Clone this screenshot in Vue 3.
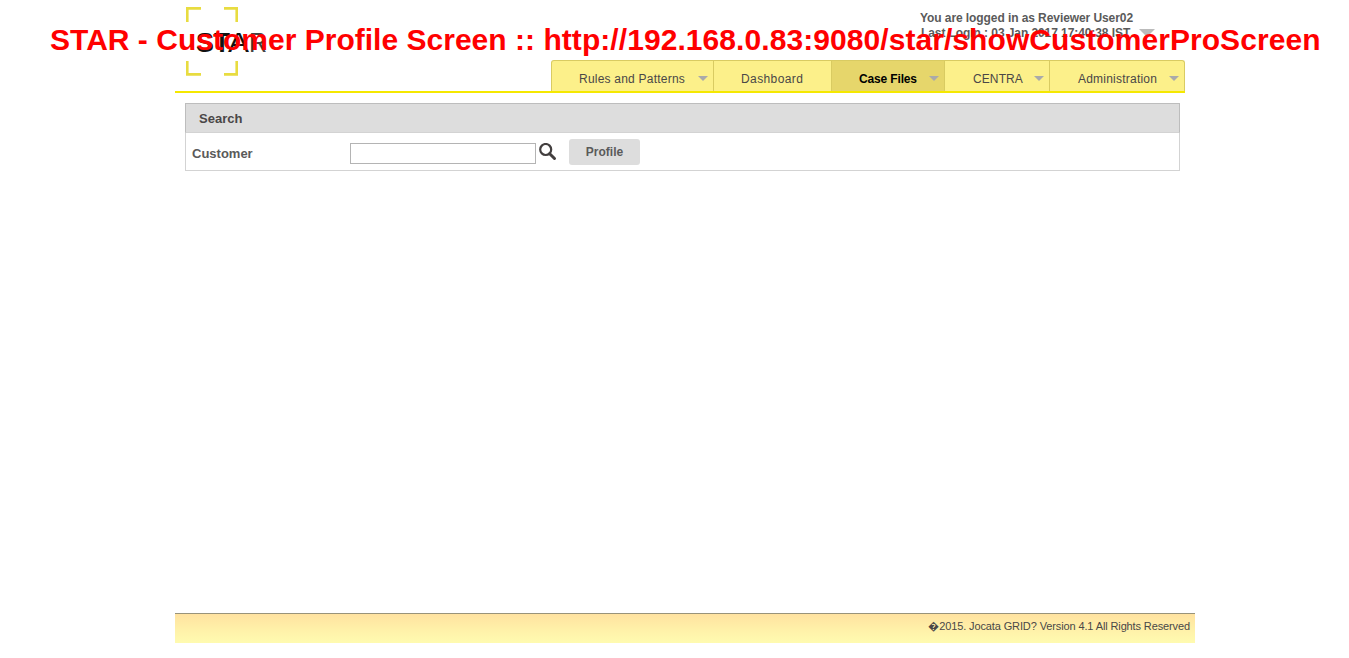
<script setup>
const tabs = [
  { label: 'Rules and Patterns', id: 'rules', menu: true },
  { label: 'Dashboard', id: 'dashboard', menu: false },
  { label: 'Case Files', id: 'cases', menu: true, active: true },
  { label: 'CENTRA', id: 'centra', menu: true },
  { label: 'Administration', id: 'admin', menu: true },
]
</script>

<template>
  <div class="page">
    <header class="header">
      <svg class="logo" width="86" height="70" viewBox="0 0 86 70">
        <g fill="none" stroke="#e8dc40" stroke-width="2.6">
          <path d="M1.300 15V1.400H15M38 1.400H50.700V15M1.300 54V67.400H15M38 67.400H50.700V54" />
        </g>
        <text x="10" y="44.500" font-size="28" font-weight="bold" textLength="18" lengthAdjust="spacingAndGlyphs">S</text>
        <text x="28" y="44.500" font-size="28" font-weight="bold" textLength="16" lengthAdjust="spacingAndGlyphs">T</text>
        <text x="42" y="44.500" font-size="28" textLength="21" lengthAdjust="spacingAndGlyphs">A</text>
        <text x="63" y="44.500" font-size="28" textLength="18" lengthAdjust="spacingAndGlyphs" class="thin">R</text>
      </svg>
      <div class="session">
        <div class="user">You are logged in as Reviewer User02</div>
        <div class="login"><span>Last Login : 03 Jan 2017 17:40:38 IST</span><i class="caret large"></i></div>
      </div>
      <nav class="nav">
        <a v-for="t in tabs" :key="t.id" class="tab" :class="[t.id, { active: t.active }]">
          <span>{{ t.label }}</span><i v-if="t.menu" class="caret"></i>
        </a>
      </nav>
    </header>
    <main class="panel">
      <h2 class="title">Search</h2>
      <div class="row">
        <label class="label" for="customer">Customer</label>
        <input id="customer" class="field" type="text" />
        <svg class="search" width="18" height="18" viewBox="0 0 18 18" fill="none" stroke="#433f3f">
          <circle cx="6.700" cy="6.500" r="5.500" stroke-width="2.200" />
          <path d="M10.700 10.700L15.500 15.500" stroke-width="3" stroke-linecap="round" />
        </svg>
        <button class="button">Profile</button>
      </div>
    </main>
    <footer class="footer">&#xFFFD;<span>2015. Jocata GRID? Version 4.1 All Rights Reserved</span></footer>
    <div class="banner">STAR - Customer Profile Screen :: <span class="url">http://192.168.0.83:9080/star/showCustomerProScreen</span></div>
  </div>
</template>

<style>
body { background: #fff; overflow: hidden; }
</style>

<style scoped>
.page {
  position: relative;
  display: flex;
  flex-direction: column;
  box-sizing: border-box;
  width: 1349px;
  height: 658px;
  padding: 0 154px 15px 175px;
  font-family: "Liberation Sans", Arial, sans-serif;
  font-size: 12px;
  color: #4a4747;
}
.header {
  display: grid;
  grid-template-columns: 376px 634px;
  grid-template-rows: 60px 31px;
  width: 1010px;
  border-bottom: 2px solid #f5e800;
}
.logo { grid-row: 1 / 3; margin: 7px 0 0 11px; overflow: visible; }
.logo text { fill: #111; }
.logo .thin { fill: #444; }
.session {
  padding: 11px 0 0 369px;
  font-weight: bold;
  line-height: 15px;
  letter-spacing: -0.08px;
  color: #5a5a5a;
  white-space: nowrap;
}
.user { line-height: 14px; }
.login { display: flex; align-items: center; line-height: 16px; }
.login span { padding-left: 1px; }
.nav {
  display: flex;
  box-sizing: border-box;
  height: 31px;
  border: 1px solid #d9cb62;
  border-bottom: 0;
  border-radius: 3px 3px 0 0;
  background: #fcf08a;
  overflow: hidden;
}
.tab {
  display: flex;
  align-items: center;
  justify-content: space-between;
  box-sizing: border-box;
  padding: 5px 5px 0 27px;
  border-right: 1px solid #d9cb62;
  white-space: nowrap;
}
.rules { width: 162px; letter-spacing: 0.22px; }
.dashboard { width: 118px; letter-spacing: 0.4px; }
.cases { width: 113px; letter-spacing: -0.15px; }
.centra { width: 105px; padding-left: 28px; letter-spacing: 0.1px; }
.admin { width: 134px; padding-left: 28px; border-right: 0; letter-spacing: 0.22px; }
.active { background: #e6d66b; color: #000; font-weight: bold; }
.caret {
  border: 5px solid transparent;
  border-top-color: #aaa;
  border-bottom: 0;
}
.caret.large { border-width: 8px 8px 0; border-top-color: #bbb; margin-left: 9px; }
.panel {
  box-sizing: border-box;
  width: 995px;
  height: 68px;
  margin: 10px 0 0 10px;
  border: 1px solid #d3d3d3;
}
.title {
  box-sizing: border-box;
  height: 30px;
  margin: -1px -1px 0;
  padding-left: 13px;
  border: 1px solid #bdbdbd;
  border-bottom-color: #d3d3d3;
  background: #ddd;
  font-size: 13px;
  line-height: 29px;
}
.row { display: flex; align-items: flex-start; padding: 6px 0 0 6px; }
.label { width: 158px; line-height: 29px; font-size: 13px; font-weight: bold; color: #5a5a5a; }
.field {
  box-sizing: border-box;
  width: 186px;
  height: 21px;
  margin-top: 4px;
  border: 1px solid #b4b4b4;
  background: #fff;
}
.search { margin: 4px 0 0 3px; }
.button {
  width: 71px;
  height: 26px;
  margin-left: 12px;
  padding: 0;
  border: 0;
  border-radius: 3px;
  background: #ddd;
  color: #5a5a5a;
  font: bold 12px "Liberation Sans", Arial, sans-serif;
}
.footer {
  box-sizing: border-box;
  height: 30px;
  margin-top: auto;
  padding-right: 5px;
  border-top: 1px solid #98937a;
  background: linear-gradient(#ffe2a0, #fff0a8 50%, #fffbb0);
  font-size: 11px;
  line-height: 25px;
  letter-spacing: -0.12px;
  text-align: right;
}
.banner {
  position: absolute;
  left: 50px;
  top: 22px;
  font-size: 30px;
  line-height: 35px;
  font-weight: bold;
  letter-spacing: 0.015px;
  color: #f00;
  white-space: nowrap;
}
.url { letter-spacing: 0.07px; }
</style>
